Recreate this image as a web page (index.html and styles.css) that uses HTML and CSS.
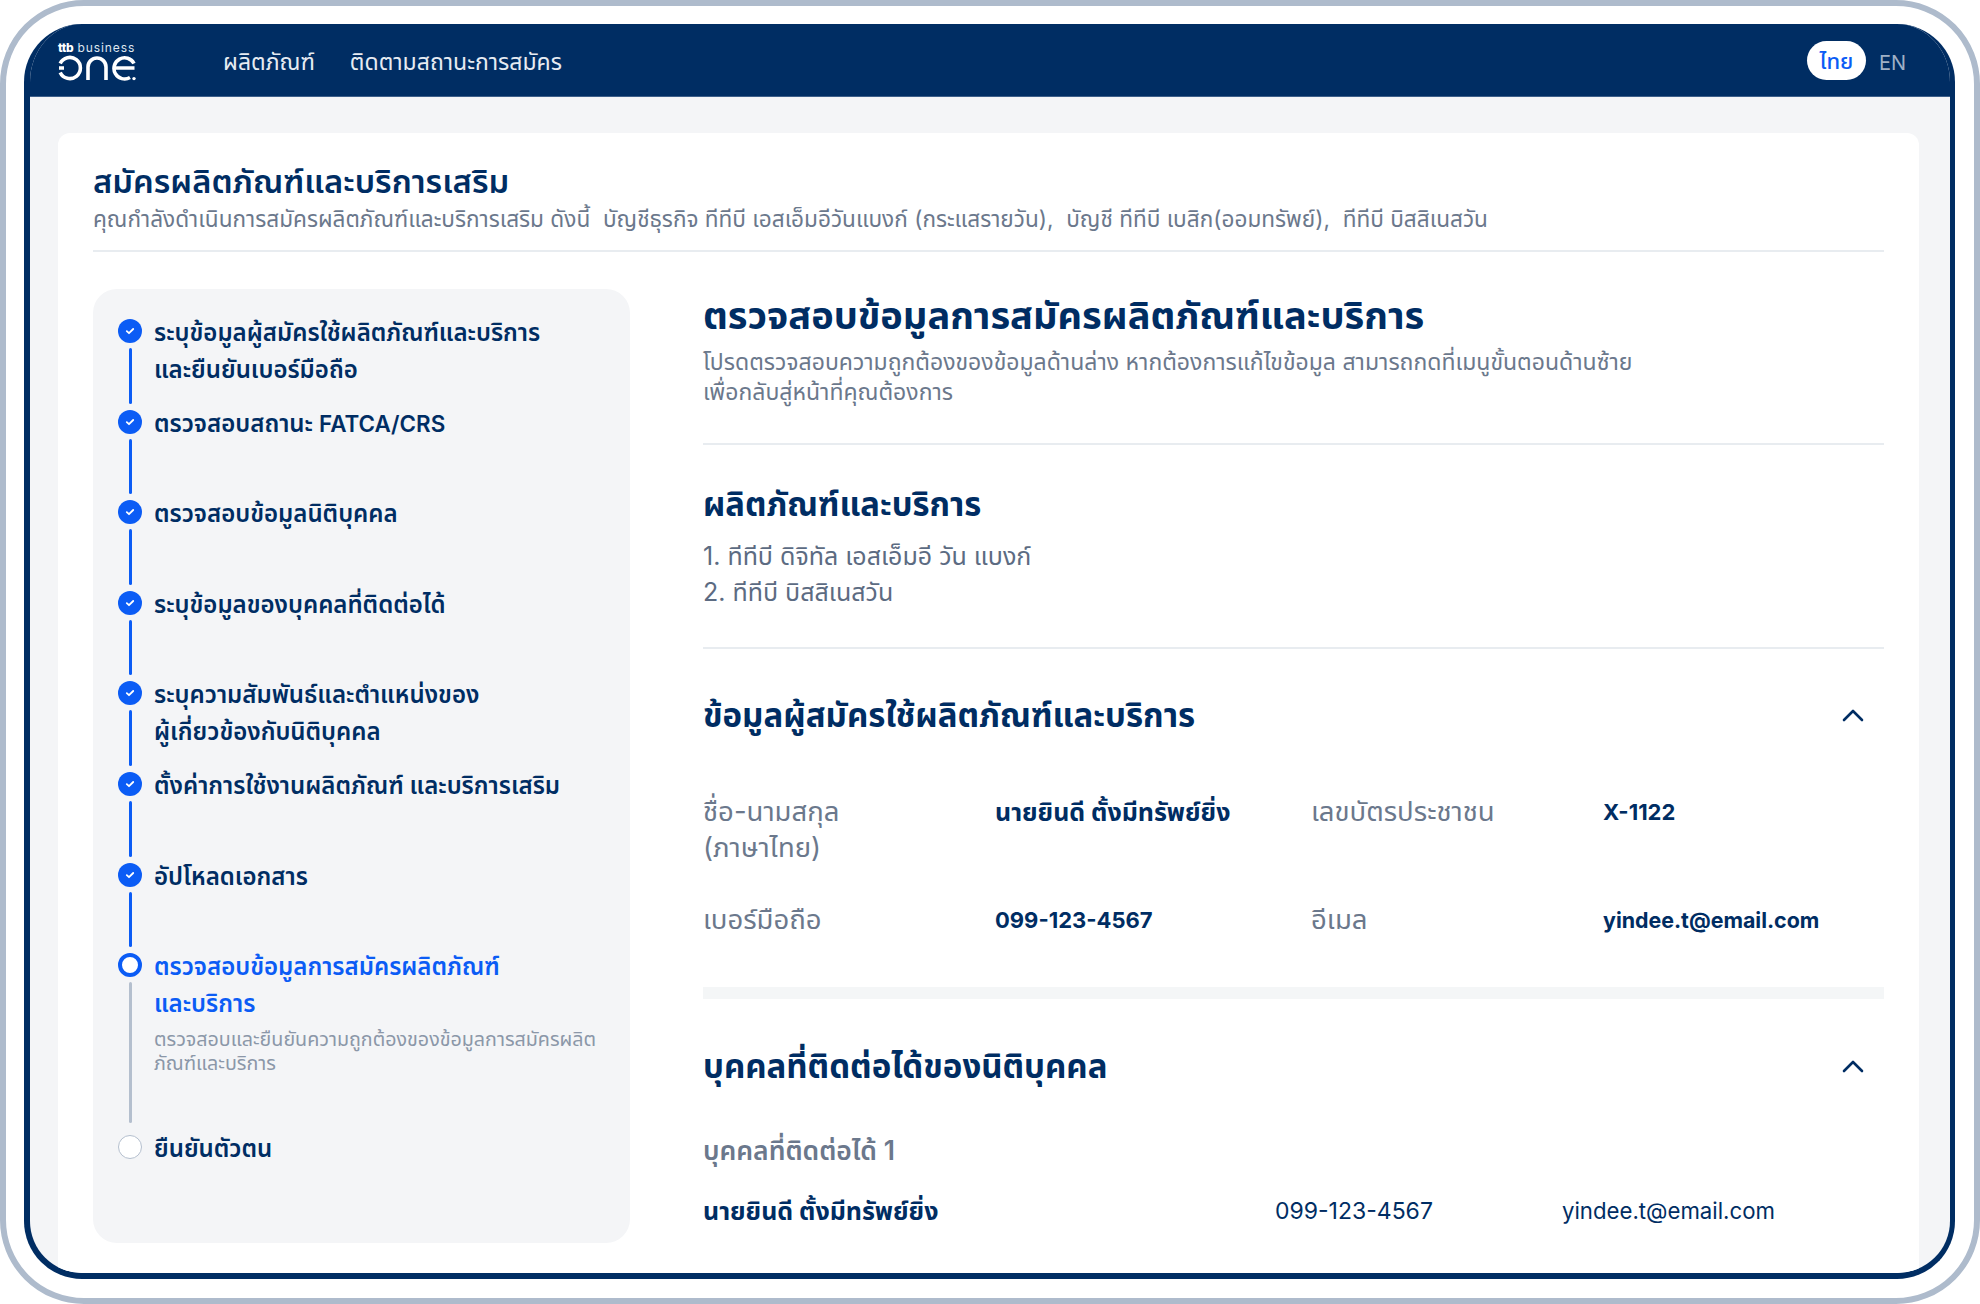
FILE: index.html
```html
<!DOCTYPE html>
<html lang="th">
<head>
<meta charset="utf-8">
<title>สมัครผลิตภัณฑ์และบริการเสริม</title>
<link rel="stylesheet" href="styles.css">
</head>
<body>
<div class="device">
  <div class="screen">
    <header class="topbar">
      <div class="logo">
        <div class="logo-top"><span class="logo-ttb">ttb</span> business</div>
        <svg class="logo-one" width="78" height="26" viewBox="0 0 78 26" fill="none" stroke="#fff" stroke-width="3.6" aria-label="one">
          <path d="M2.2 8.5A10.6 10.6 0 1 1 2.2 17.5"/>
          <path d="M1 13H6"/>
          <path d="M30 25V12A9 9 0 0 1 48 12V25"/>
          <path d="M76 8.5A10.6 10.6 0 1 0 72 22.5"/>
          <path d="M56 13H76.5"/>
          <circle cx="76" cy="23.6" r="1.7" fill="#fff" stroke="none"/>
        </svg>
      </div>
      <nav class="nav">
        <a class="nav-link">ผลิตภัณฑ์</a>
        <a class="nav-link">ติดตามสถานะการสมัคร</a>
      </nav>
      <div class="lang">
        <span class="lang-on">ไทย</span>
        <span class="lang-off">EN</span>
      </div>
    </header>
    <main class="page">
      <section class="card">
        <div class="card-head">
          <h1 class="page-title">สมัครผลิตภัณฑ์และบริการเสริม</h1>
          <p class="page-sub">คุณกำลังดำเนินการสมัครผลิตภัณฑ์และบริการเสริม ดังนี้ &nbsp;บัญชีธุรกิจ ทีทีบี เอสเอ็มอีวันแบงก์ (กระแสรายวัน), &nbsp;บัญชี ทีทีบี เบสิก(ออมทรัพย์), &nbsp;ทีทีบี บิสสิเนสวัน</p>
        </div>
        <div class="columns">
          <aside class="steps">
            <div class="step done">
              <div class="rail"><span class="dot"><svg width="12" height="12" viewBox="0 0 12 12" fill="none" stroke="#fff" stroke-width="1.8" stroke-linecap="round" stroke-linejoin="round"><path d="M2.8 6.2 5 8.2 9.2 4"/></svg></span><span class="line"></span></div>
              <div class="step-text">ระบุข้อมูลผู้สมัครใช้ผลิตภัณฑ์และบริการ<br>และยืนยันเบอร์มือถือ</div>
            </div>
            <div class="step done">
              <div class="rail"><span class="dot"><svg width="12" height="12" viewBox="0 0 12 12" fill="none" stroke="#fff" stroke-width="1.8" stroke-linecap="round" stroke-linejoin="round"><path d="M2.8 6.2 5 8.2 9.2 4"/></svg></span><span class="line"></span></div>
              <div class="step-text">ตรวจสอบสถานะ <span class="latin">FATCA/CRS</span></div>
            </div>
            <div class="step done">
              <div class="rail"><span class="dot"><svg width="12" height="12" viewBox="0 0 12 12" fill="none" stroke="#fff" stroke-width="1.8" stroke-linecap="round" stroke-linejoin="round"><path d="M2.8 6.2 5 8.2 9.2 4"/></svg></span><span class="line"></span></div>
              <div class="step-text">ตรวจสอบข้อมูลนิติบุคคล</div>
            </div>
            <div class="step done">
              <div class="rail"><span class="dot"><svg width="12" height="12" viewBox="0 0 12 12" fill="none" stroke="#fff" stroke-width="1.8" stroke-linecap="round" stroke-linejoin="round"><path d="M2.8 6.2 5 8.2 9.2 4"/></svg></span><span class="line"></span></div>
              <div class="step-text">ระบุข้อมูลของบุคคลที่ติดต่อได้</div>
            </div>
            <div class="step done">
              <div class="rail"><span class="dot"><svg width="12" height="12" viewBox="0 0 12 12" fill="none" stroke="#fff" stroke-width="1.8" stroke-linecap="round" stroke-linejoin="round"><path d="M2.8 6.2 5 8.2 9.2 4"/></svg></span><span class="line"></span></div>
              <div class="step-text">ระบุความสัมพันธ์และตำแหน่งของ<br>ผู้เกี่ยวข้องกับนิติบุคคล</div>
            </div>
            <div class="step done">
              <div class="rail"><span class="dot"><svg width="12" height="12" viewBox="0 0 12 12" fill="none" stroke="#fff" stroke-width="1.8" stroke-linecap="round" stroke-linejoin="round"><path d="M2.8 6.2 5 8.2 9.2 4"/></svg></span><span class="line"></span></div>
              <div class="step-text">ตั้งค่าการใช้งานผลิตภัณฑ์ และบริการเสริม</div>
            </div>
            <div class="step done">
              <div class="rail"><span class="dot"><svg width="12" height="12" viewBox="0 0 12 12" fill="none" stroke="#fff" stroke-width="1.8" stroke-linecap="round" stroke-linejoin="round"><path d="M2.8 6.2 5 8.2 9.2 4"/></svg></span><span class="line"></span></div>
              <div class="step-text">อัปโหลดเอกสาร</div>
            </div>
            <div class="step current">
              <div class="rail"><span class="dot"></span><span class="line"></span></div>
              <div class="step-body">
                <div class="step-text">ตรวจสอบข้อมูลการสมัครผลิตภัณฑ์<br>และบริการ</div>
                <p class="step-desc">ตรวจสอบและยืนยันความถูกต้องของข้อมูลการสมัครผลิต<br>ภัณฑ์และบริการ</p>
              </div>
            </div>
            <div class="step todo">
              <div class="rail"><span class="dot"></span></div>
              <div class="step-text">ยืนยันตัวตน</div>
            </div>
          </aside>
          <div class="detail">
            <div class="intro">
              <h2 class="detail-title">ตรวจสอบข้อมูลการสมัครผลิตภัณฑ์และบริการ</h2>
              <p class="detail-sub">โปรดตรวจสอบความถูกต้องของข้อมูลด้านล่าง หากต้องการแก้ไขข้อมูล สามารถกดที่เมนูขั้นตอนด้านซ้าย<br>เพื่อกลับสู่หน้าที่คุณต้องการ</p>
            </div>
            <div class="products">
              <h3 class="products-title">ผลิตภัณฑ์และบริการ</h3>
              <p class="products-list">1. ทีทีบี ดิจิทัล เอสเอ็มอี วัน แบงก์<br>2. ทีทีบี บิสสิเนสวัน</p>
            </div>
            <div class="section applicant">
              <div class="section-head">
                <h3 class="section-title">ข้อมูลผู้สมัครใช้ผลิตภัณฑ์และบริการ</h3>
                <svg class="chev" width="24" height="14" viewBox="0 0 24 14" fill="none" stroke="#002d63" stroke-width="2.6" stroke-linecap="round" stroke-linejoin="round"><path d="M3 12 12 3l9 9"/></svg>
              </div>
              <dl class="info">
                <dt class="label">ชื่อ-นามสกุล<br>(ภาษาไทย)</dt>
                <dd class="value">นายยินดี ตั้งมีทรัพย์ยิ่ง</dd>
                <dt class="label">เลขบัตรประชาชน</dt>
                <dd class="value latin-value">X-1122</dd>
                <dt class="label">เบอร์มือถือ</dt>
                <dd class="value latin-value">099-123-4567</dd>
                <dt class="label">อีเมล</dt>
                <dd class="value latin-value mail-value">yindee.t@email.com</dd>
              </dl>
            </div>
            <div class="section contacts">
              <div class="section-head">
                <h3 class="section-title">บุคคลที่ติดต่อได้ของนิติบุคคล</h3>
                <svg class="chev" width="24" height="14" viewBox="0 0 24 14" fill="none" stroke="#002d63" stroke-width="2.6" stroke-linecap="round" stroke-linejoin="round"><path d="M3 12 12 3l9 9"/></svg>
              </div>
              <div class="contact-label">บุคคลที่ติดต่อได้ 1</div>
              <div class="contact-row">
                <span class="contact-name">นายยินดี ตั้งมีทรัพย์ยิ่ง</span>
                <span class="contact-phone">099-123-4567</span>
                <span class="contact-mail">yindee.t@email.com</span>
              </div>
            </div>
          </div>
        </div>
      </section>
    </main>
  </div>
</div>
</body>
</html>
```

FILE: styles.css
```css
* { box-sizing: border-box; }
html, body { margin: 0; padding: 0; }
body {
  width: 1980px;
  height: 1304px;
  overflow: hidden;
  background: #fff;
  font-family: Inter, "Noto Sans", "Noto Sans Thai", "Liberation Sans", sans-serif;
  color: #002d63;
}
h1, h2, h3, p, dl, dt, dd { margin: 0; font-weight: inherit; }

.device {
  width: 1980px;
  height: 1304px;
  border: 6px solid #aebbcc;
  border-radius: 84px;
  padding: 18px 19px 19px 18px;
  background: #fff;
}
.screen {
  height: 100%;
  display: flex;
  flex-direction: column;
  border: solid #002d63;
  border-width: 0 5px 6px 6px;
  border-radius: 58px;
  overflow: hidden;
  background: #f4f5f7;
}

.topbar {
  flex: 0 0 73px;
  background: #002d63;
  display: flex;
  align-items: center;
  color: #fff;
  padding: 0 44px 0 28px;
  border-bottom: 1px solid #3d5f8a;
}
.logo { width: 78px; margin-right: 87px; padding-top: 2px; }
.logo-top { font-size: 12px; line-height: 12px; letter-spacing: .9px; color: #dfe6ef; white-space: nowrap; }
.logo-ttb { font-weight: 800; color: #fff; letter-spacing: -.4px; }
.logo-one { display: block; margin-top: 1px; }
.nav { display: flex; gap: 35px; font-size: 23px; color: #e6ebf2; padding-top: 5px; }
.lang { margin-left: auto; display: flex; align-items: center; gap: 13px; font-size: 20px; }
.lang-on {
  width: 59px;
  height: 39px;
  padding-top: 4px;
  background: #fff;
  border-radius: 20px;
  color: #0b5cf5;
  display: flex;
  align-items: center;
  justify-content: center;
  font-size: 22px;
  font-weight: 500;
}
.lang-off { color: #9fb0c6; padding-top: 5px; }

.page { flex: 1; min-height: 0; padding: 36px 31px 0 28px; }
.card {
  height: 100%;
  background: #fff;
  border-radius: 12px 12px 0 0;
  padding: 26px 35px 0;
}
.card-head { height: 93px; border-bottom: 2px solid #e8ecf0; }
.page-title { font-size: 32.7px; line-height: 44px; font-weight: 600; }
.page-sub { font-size: 22.6px; line-height: 30px; color: #6b788c; margin-top: 1px; white-space: nowrap; }

.columns { display: flex; gap: 73px; padding-top: 37px; }
.steps {
  flex: 0 0 537px;
  height: 954px;
  background: #f4f5f7;
  border-radius: 24px;
  padding: 30px 25px 0;
}
.step { display: flex; gap: 12px; min-height: 90.6px; }
.step.current { min-height: 182px; }
.rail { flex: 0 0 24px; display: flex; flex-direction: column; align-items: center; }
.dot {
  flex: 0 0 24px;
  width: 24px;
  border-radius: 50%;
  display: flex;
  align-items: center;
  justify-content: center;
}
.line { flex: 1; width: 3px; margin: 5px 0 6px; border-radius: 2px; background: #0b5cf5; }
.done .dot { background: #0b5cf5; }
.current .dot { border: 4px solid #0b5cf5; background: #fff; }
.current .line { background: #b4bfce; margin-bottom: 12px; }
.todo .dot { border: 1.5px solid #b4bfce; background: #fff; }
.step-text { font-size: 24px; line-height: 36.5px; font-weight: 600; color: #002d63; margin-top: -4px; white-space: nowrap; }
.latin { font-size: 22.4px; }
.current .step-text { color: #0b5cf5; }
.step-desc { font-size: 19.7px; line-height: 24px; color: #8b97a8; margin-top: 5px; white-space: nowrap; }

.detail { flex: 1; min-width: 0; }
.intro { height: 156px; border-bottom: 2px solid #e8ecf0; }
.detail-title { font-size: 38px; line-height: 52px; font-weight: 700; }
.detail-sub { font-size: 23px; line-height: 30px; color: #6b788c; margin-top: 6px; white-space: nowrap; }
.products { height: 204px; padding-top: 37px; border-bottom: 2px solid #e8ecf0; }
.products-title { font-size: 32.8px; line-height: 44px; font-weight: 700; }
.products-list { font-size: 25px; line-height: 36px; color: #5c6b82; margin-top: 12px; white-space: nowrap; }

.section-head { display: flex; align-items: center; justify-content: space-between; padding-right: 19px; }
.section-title { font-size: 33px; line-height: 44px; font-weight: 700; }
.applicant { height: 350px; padding-top: 44px; border-bottom: 12px solid #f4f6f7; }
.info {
  display: grid;
  grid-template-columns: 292px 316px 292px 1fr;
  row-gap: 37px;
  margin-top: 57px;
  font-size: 27.5px;
  line-height: 36px;
}
.label { color: #6b788c; margin-top: -1px; }
.value { font-size: 25px; font-weight: 700; color: #002d63; white-space: nowrap; }
.latin-value { font-size: 22px; }
.mail-value { font-size: 21.4px; }
.contacts { padding-top: 45px; }
.contact-label { font-size: 26.5px; line-height: 36px; font-weight: 600; color: #6b788c; margin-top: 44px; }
.contact-row {
  display: grid;
  grid-template-columns: 572px 287px 1fr;
  margin-top: 25px;
  font-size: 23px;
  line-height: 36px;
  white-space: nowrap;
}
.contact-name { font-size: 25px; font-weight: 700; }
.contact-mail { font-size: 22.2px; }
```
